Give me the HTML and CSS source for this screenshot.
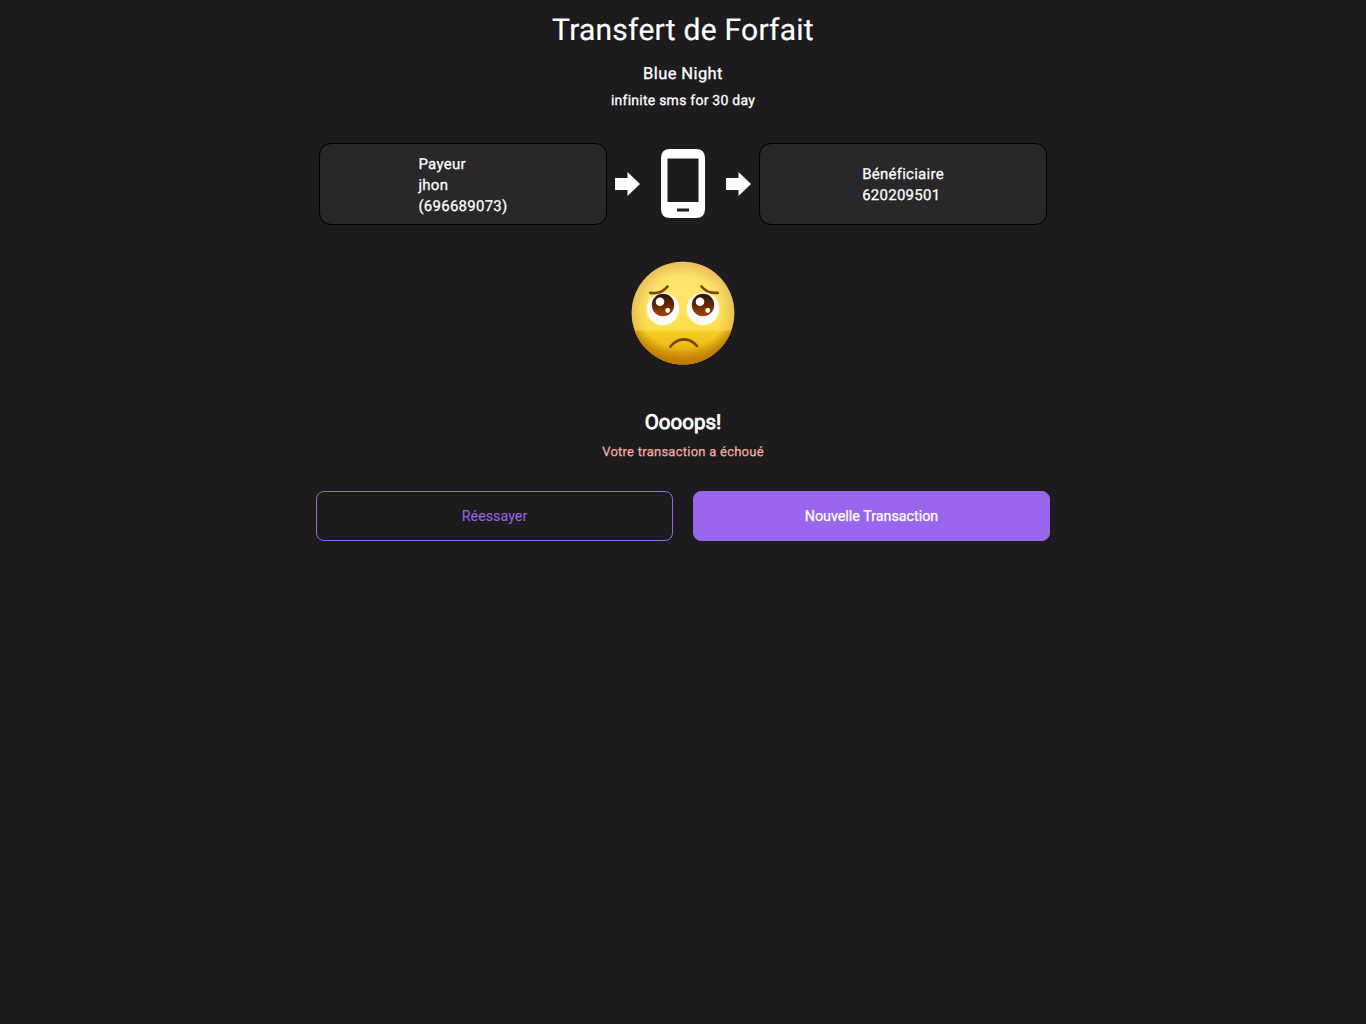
FILE: index.html
```html
<!DOCTYPE html>
<html lang="fr">
<head>
<meta charset="utf-8">
<title>Transfert de Forfait</title>
<link rel="stylesheet" href="styles.css">
</head>
<body>
<main class="page">
  <h1 class="title"><span>Transfert de Forfait</span></h1>
  <h2 class="plan"><span>Blue Night</span></h2>
  <p class="details"><span>infinite sms for 30 day</span></p>

  <section class="transfer">
    <div class="party"><p><span>Payeur</span><br><span>jhon</span><br><span>(696689073)</span></p></div>
    <div class="flow">
      <svg class="arrow" viewBox="0 0 25 25"><path d="M0 6H12.500V0L25 12L12.500 24V18H0Z" fill="#fff"/></svg>
      <svg class="phone" viewBox="0 0 44 70"><path fill="#fff" fill-rule="evenodd" d="M9 0H35Q44 0 44 9V60Q44 69 35 69H9Q0 69 0 60V9Q0 0 9 0ZM6.500 9.500V53H37.500V9.500ZM16 59.500V62.500H28V59.500Z"/></svg>
      <svg class="arrow" viewBox="0 0 25 25"><path d="M0 6H12.500V0L25 12L12.500 24V18H0Z" fill="#fff"/></svg>
    </div>
    <div class="party"><p><span>Bénéficiaire</span><br><span>620209501</span></p></div>
  </section>

  <svg class="face" viewBox="0 0 104 104">
    <defs>
      <linearGradient id="skin" x1="0" y1="0" x2="0" y2="1">
        <stop offset="0" stop-color="#ffdf6a"/><stop offset=".3" stop-color="#ffe56d"/><stop offset=".66" stop-color="#ffdf49"/><stop offset="1" stop-color="#ffdf49"/>
      </linearGradient>
      <radialGradient id="edge" cx=".5" cy=".5" r=".5">
        <stop offset=".72" stop-color="#d6a44c" stop-opacity="0"/><stop offset="1" stop-color="#d6a44c" stop-opacity=".55"/>
      </radialGradient>
      <linearGradient id="chin" gradientUnits="userSpaceOnUse" x1="0" y1="69" x2="0" y2="104">
        <stop offset="0" stop-color="#f8d02a"/><stop offset=".4" stop-color="#edbf1c"/><stop offset=".75" stop-color="#dfa60d"/><stop offset="1" stop-color="#d09200"/>
      </linearGradient>
      <radialGradient id="chin-edge" gradientUnits="userSpaceOnUse" cx="52" cy="41" r="63">
        <stop offset=".74" stop-color="#be7b00" stop-opacity="0"/><stop offset=".94" stop-color="#be7b00" stop-opacity=".9"/><stop offset="1" stop-color="#be7b00"/>
      </radialGradient>
      <linearGradient id="iris" x1="0" y1="0" x2="0" y2="1">
        <stop offset=".1" stop-color="#351700"/><stop offset=".55" stop-color="#682800"/><stop offset="1" stop-color="#a5440b"/>
      </linearGradient>
      <clipPath id="lower"><rect y="69.500" width="104" height="35"/></clipPath>
    </defs>
    <circle cx="52" cy="52" r="51.300" fill="url(#skin)"/>
    <circle cx="52" cy="52" r="51.300" fill="url(#edge)"/>
    <g clip-path="url(#lower)"><circle cx="52" cy="52" r="51.300" fill="url(#chin)"/><circle cx="52" cy="52" r="51.300" fill="url(#chin-edge)"/></g>
    <g fill="#fafafa"><circle cx="32" cy="48" r="16.300"/><circle cx="72" cy="48" r="16.300"/></g>
    <g fill="url(#iris)"><circle cx="32" cy="44" r="11.200"/><circle cx="72" cy="44" r="11.200"/></g>
    <g fill="#fff"><circle cx="29" cy="40.700" r="4.300"/><circle cx="36.700" cy="49.500" r="2.400"/><circle cx="69" cy="40.700" r="4.300"/><circle cx="76.700" cy="49.500" r="2.400"/></g>
    <path d="M19.300 31.800Q30.500 33.500 36.500 25.500M70.500 25.500Q76.500 33 86.700 31.800M39.500 85.500C47 76 58.500 76 66 85" fill="none" stroke="#844106" stroke-width="2.700" stroke-linecap="round"/>
  </svg>

  <h2 class="oops"><span>Oooops!</span></h2>
  <p class="error"><span>Votre transaction a échoué</span></p>

  <div class="actions">
    <button class="button outline"><span>Réessayer</span></button>
    <button class="button filled"><span>Nouvelle Transaction</span></button>
  </div>
</main>
</body>
</html>
```
FILE: styles.css
```css
body { margin: 0; background: #1e1b1e; color: #fff; font-family: Roboto, sans-serif; text-rendering: geometricPrecision; }
.page { width: 734px; height: 1024px; margin: 0 auto; display: flex; flex-direction: column; align-items: center; }
h1, h2, p { margin: 0; }
.title { margin-top: 11px; font-size: 30px; line-height: 40px; font-weight: 400; letter-spacing: .25px; -webkit-text-stroke: .2px currentColor; }
.plan { margin-top: 12px; font-size: 16.5px; line-height: 24px; font-weight: 400; letter-spacing: .4px; -webkit-text-stroke: .3px currentColor; }
.details { margin-top: 4px; font-size: 14px; line-height: 20px; font-weight: 400; letter-spacing: .24px; -webkit-text-stroke: .3px currentColor; }
.transfer { width: 728px; height: 82px; margin-top: 32px; display: flex; justify-content: space-between; }
.party { box-sizing: border-box; width: 288px; padding-top: 2px; border: 1px solid #000; border-radius: 12px; background: #292729; display: flex; align-items: center; justify-content: center; font-size: 15px; line-height: 21px; font-weight: 400; letter-spacing: .26px; -webkit-text-stroke: .25px currentColor; }
.flow { width: 136px; display: flex; align-items: center; justify-content: space-between; }
.arrow { width: 25px; height: 25px; }
.phone { width: 44px; height: 70px; }
.face { width: 104px; height: 104px; margin-top: 36px; }
.oops { margin-top: 46px; font-size: 20.5px; line-height: 24px; font-weight: 400; -webkit-text-stroke: .8px currentColor; }
.error { margin-top: 8px; color: #f2aca2; font-size: 13px; line-height: 20px; font-weight: 400; letter-spacing: .25px; -webkit-text-stroke: .25px currentColor; }
.actions { width: 734px; margin-top: 28px; display: grid; grid-template-columns: 1fr 1fr; gap: 20px; }
.button { height: 50px; border: 1px solid #9966ed; border-radius: 8px; font: 400 14.3px Roboto, sans-serif; padding: 0; }
.outline { background: transparent; color: #9966ed; }
.filled { background: #9966ed; color: #fff; -webkit-text-stroke: .25px currentColor; }
```
